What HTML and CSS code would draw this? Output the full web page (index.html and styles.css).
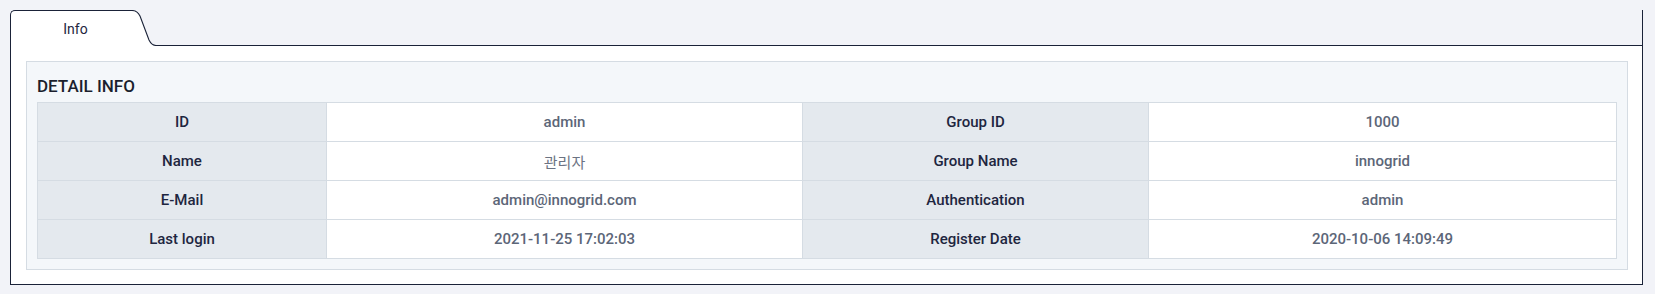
FILE: index.html
```html
<!DOCTYPE html>
<html lang="en">
<head>
<meta charset="utf-8">
<title>Info</title>
<link rel="stylesheet" href="styles.css">
</head>
<body>
<div class="page">
  <div class="tabs">
    <div class="tab">Info</div>
    <svg class="tab-curve" width="26" height="36" viewBox="0 0 26 36">
      <path d="M0 0 L2 0 C6 0 8 1.5 10 5.5 L19 30 C21 34.5 23 35.5 26 35.5 L26 36 L0 36 Z" fill="#ffffff"/>
      <path d="M0 0.5 H2 C6 0.5 8 2 10 6 L19 30 C21 34 23 35.5 26 35.5" fill="none" stroke="#1a2238" stroke-width="1.1"/>
    </svg>
    <div class="tab-fill"></div>
  </div>
  <div class="panel">
    <div class="detail">
      <h2 class="detail-title">DETAIL INFO</h2>
      <div class="grid">
        <div class="cell label">ID</div>
        <div class="cell value">admin</div>
        <div class="cell label">Group ID</div>
        <div class="cell value">1000</div>

        <div class="cell label">Name</div>
        <div class="cell value ko">관리자</div>
        <div class="cell label">Group Name</div>
        <div class="cell value">innogrid</div>

        <div class="cell label">E-Mail</div>
        <div class="cell value">admin@innogrid.com</div>
        <div class="cell label">Authentication</div>
        <div class="cell value">admin</div>

        <div class="cell label">Last login</div>
        <div class="cell value">2021-11-25 17:02:03</div>
        <div class="cell label">Register Date</div>
        <div class="cell value">2020-10-06 14:09:49</div>
      </div>
    </div>
  </div>
</div>
</body>
</html>
```

FILE: styles.css
```css
* { box-sizing: border-box; }

html, body {
  margin: 0;
  padding: 0;
  background: #f2f3f8;
  font-family: Roboto, "Noto Sans CJK KR", sans-serif;
}

.page {
  padding: 10px 12px 9px 10px;
}

.tabs {
  display: flex;
  height: 36px;
}

.tab {
  width: 120px;
  height: 36px;
  background: #ffffff;
  border-top: 1px solid #1a2238;
  border-left: 1px solid #1a2238;
  border-top-left-radius: 5px;
  display: flex;
  align-items: center;
  justify-content: center;
  padding-left: 10px;
  padding-top: 1px;
  font-size: 14px;
  color: #1e2640;
  font-weight: 400;
}

.tab-curve {
  display: block;
  flex: none;
}

.tab-fill {
  flex: 1;
  border-bottom: 1px solid #1a2238;
  border-right: 1px solid #1a2238;
}

.panel {
  background: #ffffff;
  border: 1px solid #1a2238;
  border-top: none;
  padding: 15px 14px 14px 15px;
}

.detail {
  background: #f4f7fa;
  border: 1px solid #d5dce3;
  padding: 10px;
}

.detail-title {
  margin: 0;
  padding: 4px 0 6px 0;
  font-size: 17px;
  line-height: 20px;
  font-weight: 500;
  color: #1b1f2e;
}

.grid {
  display: grid;
  grid-template-columns: 288px 475px 345px 1fr;
  grid-auto-rows: 38px;
  gap: 1px;
  padding: 1px;
  background: #d5dce3;
}

.cell {
  display: flex;
  align-items: center;
  justify-content: center;
  font-size: 15px;
  font-weight: 500;
}

.label {
  background: #e4e9ee;
  color: #1e2640;
}

.value {
  background: #ffffff;
  color: #5c6678;
}

.value.ko {
  font-weight: 400;
  color: #6b7383;
}
```
